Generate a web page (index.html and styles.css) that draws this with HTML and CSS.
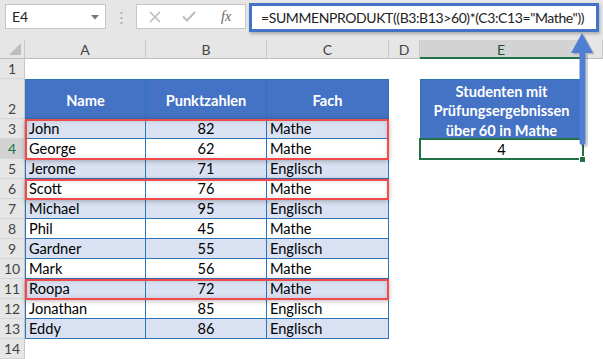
FILE: index.html
```html
<!DOCTYPE html>
<html lang="de">
<head>
<meta charset="utf-8">
<title>SUMMENPRODUKT</title>
<link rel="stylesheet" href="styles.css">
</head>
<body>
<div class="app">
  <div class="toolbar">
    <div class="namebox">
      <span class="ref">E4</span>
      <svg class="caret" width="8" height="5" viewBox="0 0 8 5"><path d="M0 0H8L4 4.5Z" fill="#777"/></svg>
    </div>
    <svg class="grip" width="3" height="12" viewBox="0 0 3 12"><rect x="0.5" y="0" width="2" height="2" fill="#b0b0b0"/><rect x="0.5" y="5" width="2" height="2" fill="#b0b0b0"/><rect x="0.5" y="10" width="2" height="2" fill="#b0b0b0"/></svg>
    <div class="fbtns">
      <svg class="btn" width="12" height="12" viewBox="0 0 12 12"><path d="M1 1L11 11M11 1L1 11" stroke="#bdbdbd" stroke-width="1.6" fill="none"/></svg>
      <svg class="btn" width="14" height="11" viewBox="0 0 14 11"><path d="M1 5.5L5 9.5L13 1" stroke="#bdbdbd" stroke-width="2" fill="none"/></svg>
      <span class="fx">fx</span>
    </div>
    <div class="formula">=SUMMENPRODUKT((B3:B13&gt;60)*(C3:C13="Mathe"))</div>
  </div>

  <div class="sheet">
    <!-- column headers -->
    <div class="ch corner"><svg width="12" height="12" viewBox="0 0 12 12"><path d="M12 0V12H0Z" fill="#bdbdbd"/></svg></div>
    <div class="ch">A</div>
    <div class="ch">B</div>
    <div class="ch">C</div>
    <div class="ch">D</div>
    <div class="ch sel">E</div>
    <div class="ch"></div>

    <!-- row 1 -->
    <div class="rh">1</div>
    <div class="c"></div><div class="c"></div><div class="c"></div><div class="c"></div><div class="c"></div><div class="c"></div>

    <!-- row 2 -->
    <div class="rh">2</div>
    <div class="t hd first">Name</div>
    <div class="t hd">Punktzahlen</div>
    <div class="t hd">Fach</div>
    <div class="c"></div>
    <div class="t hd merged">Studenten mit<br>Prüfungsergebnissen<br>über 60 in Mathe</div>
    <div class="c"></div>

    <!-- row 3 -->
    <div class="rh">3</div>
    <div class="t band first">John</div><div class="t band num">82</div><div class="t band">Mathe</div>
    <div class="c"></div><div class="c"></div>

    <!-- row 4 -->
    <div class="rh rsel">4</div>
    <div class="t first">George</div><div class="t num">62</div><div class="t">Mathe</div>
    <div class="c"></div><div class="c result">4</div><div class="c"></div>

    <div class="rh">5</div>
    <div class="t band first">Jerome</div><div class="t band num">71</div><div class="t band">Englisch</div>
    <div class="c"></div><div class="c"></div><div class="c"></div>

    <div class="rh">6</div>
    <div class="t first">Scott</div><div class="t num">76</div><div class="t">Mathe</div>
    <div class="c"></div><div class="c"></div><div class="c"></div>

    <div class="rh">7</div>
    <div class="t band first">Michael</div><div class="t band num">95</div><div class="t band">Englisch</div>
    <div class="c"></div><div class="c"></div><div class="c"></div>

    <div class="rh">8</div>
    <div class="t first">Phil</div><div class="t num">45</div><div class="t">Mathe</div>
    <div class="c"></div><div class="c"></div><div class="c"></div>

    <div class="rh">9</div>
    <div class="t band first">Gardner</div><div class="t band num">55</div><div class="t band">Englisch</div>
    <div class="c"></div><div class="c"></div><div class="c"></div>

    <div class="rh">10</div>
    <div class="t first">Mark</div><div class="t num">56</div><div class="t">Mathe</div>
    <div class="c"></div><div class="c"></div><div class="c"></div>

    <div class="rh">11</div>
    <div class="t band first">Roopa</div><div class="t band num">72</div><div class="t band">Mathe</div>
    <div class="c"></div><div class="c"></div><div class="c"></div>

    <div class="rh">12</div>
    <div class="t first">Jonathan</div><div class="t num">85</div><div class="t">Englisch</div>
    <div class="c"></div><div class="c"></div><div class="c"></div>

    <div class="rh">13</div>
    <div class="t band first">Eddy</div><div class="t band num">86</div><div class="t band">Englisch</div>
    <div class="c"></div><div class="c"></div><div class="c"></div>

    <div class="rh">14</div>
    <div class="c"></div><div class="c"></div><div class="c"></div><div class="c"></div><div class="c"></div><div class="c"></div>

    <!-- overlays -->
    <div class="mark m34"></div>
    <div class="mark m6"></div>
    <div class="mark m11"></div>
    <div class="handle"></div>
  </div>

  <svg class="arrow" width="30" height="120" viewBox="0 0 30 120">
    <path d="M14 1L25 21H18V110Q18 114 14.8 114H14.2Q11 114 11 110V21H3Z" fill="#000" opacity="0.18" transform="translate(2,1.5)"/>
    <path d="M14 1L25 21H17.5V110Q17.5 113 14.8 113H14.2Q11.5 113 11.5 110V21H3Z" fill="#4f7ed2"/>
  </svg>
</div>
</body>
</html>
```

FILE: styles.css
```css
* { box-sizing: border-box; }
html, body { margin: 0; padding: 0; background: #fff; }
body { font-family: "Lato", "Liberation Sans", sans-serif; color: #000; }

.app { position: relative; width: 603px; height: 359px; overflow: hidden; }

.toolbar {
  height: 40px;
  background: #e6e6e6;
  display: flex;
  align-items: flex-start;
  padding: 3px 2px 0 5px;
}
.namebox {
  margin-top: 1px;
  width: 101px;
  height: 25px;
  background: #fff;
  border: 1px solid #c6c6c6;
  display: flex;
  align-items: center;
  justify-content: space-between;
  padding: 0 6px 0 6px;
  font-size: 14px;
  color: #222;
}
.namebox .caret { margin-top: 1px; }
.grip { margin: 9px 0 0 14px; }
.fbtns {
  margin: 1px 0 0 13px;
  width: 110px;
  height: 25px;
  background: #fff;
  border: 1px solid #c6c6c6;
  display: flex;
  align-items: center;
  padding: 0 0 0 12px;
  gap: 21px;
}
.fx {
  font-family: "Liberation Serif", serif;
  font-style: italic;
  font-size: 14px;
  color: #666;
  margin-left: 4px;
}
.formula {
  margin-left: 3px;
  width: 350px;
  height: 29px;
  background: #fff;
  border: 3px solid #4472c4;
  box-shadow: 1px 2px 3px rgba(0,0,0,0.25);
  font-size: 14px;
  letter-spacing: -0.4px;
  color: #222;
  padding: 0 0 0 9px;
  display: flex;
  align-items: center;
  white-space: nowrap;
  overflow: hidden;
}

.sheet {
  position: relative;
  display: grid;
  grid-template-columns: 25px 121px 121px 122px 31px 163px 20px;
  grid-template-rows: 19px 20px 40px repeat(12, 20px);
  font-size: 14.6px;
}

.ch {
  background: #e6e6e6;
  border-right: 1px solid #c8c8c8;
  border-bottom: 1px solid #bdbdbd;
  display: flex;
  align-items: center;
  justify-content: center;
  font-size: 14px;
  color: #444;
  padding-top: 1px;
}
.ch.corner { justify-content: flex-end; align-items: flex-end; padding: 0 3px 3px 0; }
.ch.sel {
  background: #d3d3d3;
  border-bottom: 2px solid #217346;
  color: #1f5234;
}

.rh {
  background: #e6e6e6;
  border-right: 1px solid #c8c8c8;
  border-bottom: 1px solid #d6d6d6;
  display: flex;
  align-items: flex-end;
  justify-content: center;
  padding-bottom: 0;
  font-size: 14px;
  color: #444;
  line-height: 18px;
}
.rh.rsel { background: #d3d3d3; color: #217346; }

.c { background: #fff; }

.t {
  border-right: 1px solid #2e75b6;
  border-bottom: 1px solid #2e75b6;
  display: flex;
  align-items: flex-end;
  padding: 0 3px 0 3px;
  line-height: 18px;
  white-space: nowrap;
}
.t.first { border-left: 1px solid #2e75b6; }
.t.band { background: #d9e1f2; }
.t.num { justify-content: center; }
.t.hd {
  background: #4472c4;
  color: #fff;
  font-weight: bold;
  justify-content: center;
  align-items: center;
  border-top: 1px solid #2e75b6;
  border-right-color: #2e75b6;
  padding-top: 3px;
}
.t.merged {
  grid-row: span 2;
  border-left: 1px solid #2e75b6;
  text-align: center;
  line-height: 19.5px;
  padding-top: 4px;
}

.result {
  display: flex;
  align-items: flex-end;
  justify-content: center;
  line-height: 18px;
  padding-bottom: 0;
  outline: 2px solid #217346;
  outline-offset: -1px;
  position: relative;
}

.mark {
  position: absolute;
  left: 25px;
  width: 364px;
  border: 2px solid #f24a4a;
  box-shadow: 0 1px 5px rgba(0,0,0,0.28), inset 0 0 5px rgba(0,0,0,0.12);
}
.m34 { top: 79px; height: 41px; }
.m6 { top: 139px; height: 21px; }
.m11 { top: 239px; height: 21px; }

.handle {
  position: absolute;
  left: 580px;
  top: 117px;
  width: 5px;
  height: 5px;
  background: #217346;
  outline: 1px solid #fff;
}

.arrow {
  position: absolute;
  left: 568px;
  top: 32px;
}
```
